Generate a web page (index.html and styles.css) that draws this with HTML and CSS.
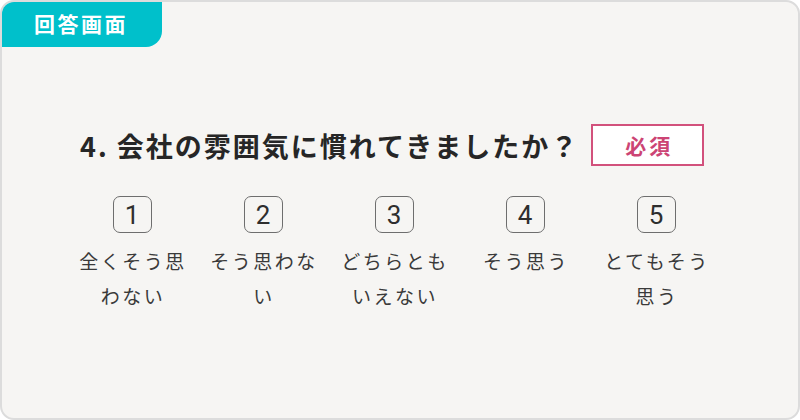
FILE: index.html
```html
<!DOCTYPE html>
<html lang="ja">
<head>
<meta charset="utf-8">
<link rel="stylesheet" href="styles.css">
</head>
<body>
<div class="card">
  <div class="tab">回答画面</div>
  <div class="content">
    <div class="question-row">
      <h1 class="question">4. 会社の雰囲気に慣れてきましたか？</h1>
      <span class="required">必須</span>
    </div>
    <div class="options">
      <div class="option"><span class="num">1</span><span class="label">全くそう思わない</span></div>
      <div class="option"><span class="num">2</span><span class="label">そう思わない</span></div>
      <div class="option"><span class="num">3</span><span class="label">どちらともいえない</span></div>
      <div class="option"><span class="num">4</span><span class="label">そう思う</span></div>
      <div class="option"><span class="num">5</span><span class="label">とてもそう思う</span></div>
    </div>
  </div>
</div>
</body>
</html>
```
FILE: styles.css
```css
* { box-sizing: border-box; }
html, body { margin: 0; padding: 0; }
body {
  width: 800px;
  height: 420px;
  font-family: "Noto Sans CJK JP", "Noto Sans", sans-serif;
  background: #ffffff;
}
.card {
  position: relative;
  width: 800px;
  height: 420px;
  background: #f6f5f3;
  border: 2px solid #dcdcdc;
  border-radius: 14px;
  overflow: hidden;
}
.tab {
  position: absolute;
  left: -2px;
  top: -2px;
  width: 162px;
  height: 47px;
  background: #00c0cb;
  color: #ffffff;
  font-weight: 700;
  font-size: 21px;
  letter-spacing: 2.5px;
  line-height: 47px;
  padding-left: 34px;
  border-radius: 14px 0 16px 0;
}
.content {
  padding: 122px 0 0 78px;
}
.question-row {
  display: flex;
  align-items: center;
  gap: 12px;
}
.question {
  margin: 0;
  font-size: 27px;
  font-weight: 700;
  letter-spacing: 2px;
  color: #262626;
  font-family: "Noto Sans CJK JP", sans-serif;
}
.required {
  display: flex;
  align-items: center;
  justify-content: center;
  width: 113px;
  height: 42px;
  border: 2px solid #d2517c;
  background: #ffffff;
  color: #cc4474;
  font-weight: 700;
  font-size: 21px;
  letter-spacing: 3px;
  padding-left: 3px;
}
.options {
  display: flex;
  gap: 17px;
  margin-top: 30px;
  margin-left: -5px;
}
.option {
  width: 114px;
  display: flex;
  flex-direction: column;
  align-items: center;
}
.num {
  width: 39px;
  height: 37px;
  border: 1.5px solid #6e6e6e;
  border-radius: 7px;
  display: flex;
  align-items: center;
  justify-content: center;
  font-family: "Roboto", "Noto Sans", sans-serif;
  font-size: 26px;
  color: #2e2e2e;
}
.label {
  margin-top: 10px;
  font-size: 19px;
  line-height: 35px;
  letter-spacing: 2.5px;
  color: #3a3a3a;
  text-align: center;
  padding-left: 2px;
}
```
